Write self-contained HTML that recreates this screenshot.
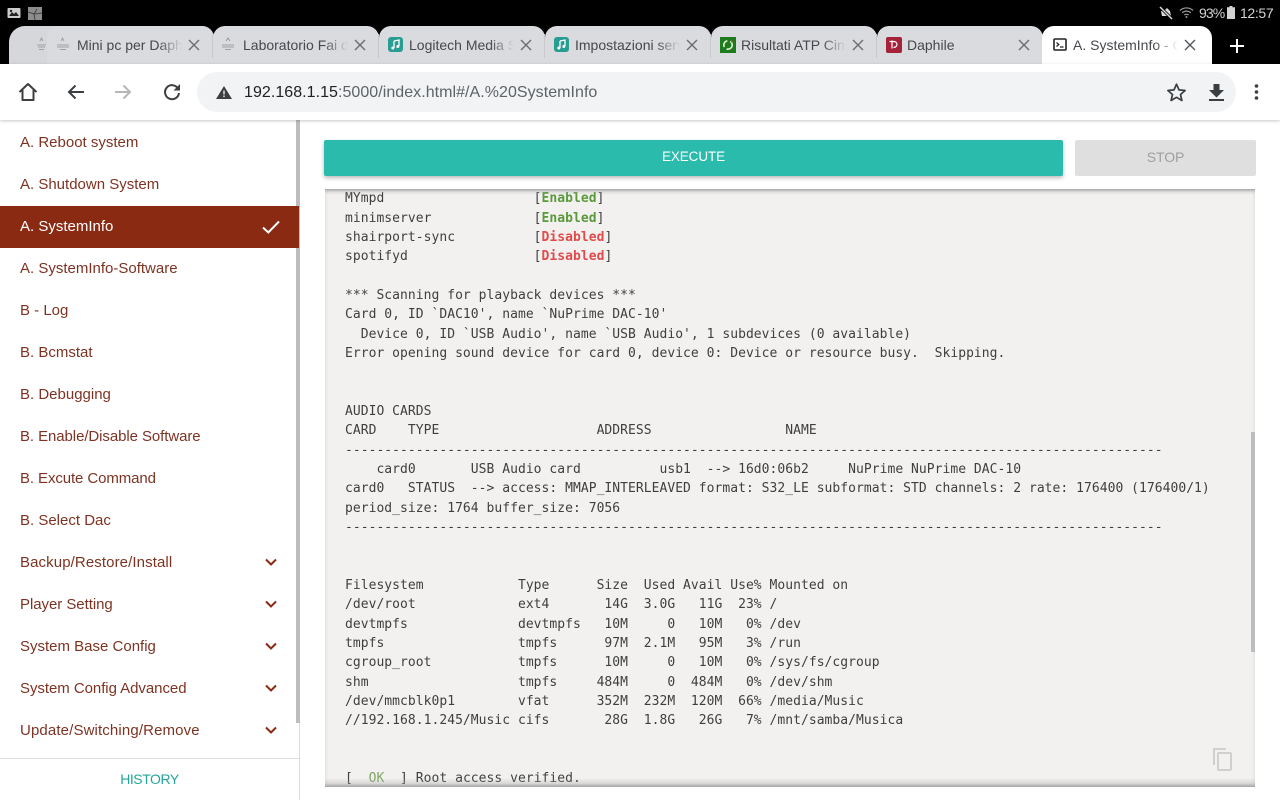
<!DOCTYPE html>
<html><head><meta charset="utf-8">
<style>
html,body{margin:0;padding:0;width:1280px;height:800px;overflow:hidden;background:#fff;font-family:"Liberation Sans",sans-serif}
.a{position:absolute}
#top{left:0;top:0;width:1280px;height:64px;background:#000}
.tab{position:absolute;top:26px;height:38px;background:#dadbde;border-radius:12px 12px 0 0}
.sep{position:absolute;top:34px;width:1px;height:24px;background:#c8c9cc}
.tt{position:absolute;top:36px;height:18px;line-height:18px;font-size:14px;color:#45484c;white-space:nowrap;overflow:hidden}
.fade{position:absolute;top:36px;height:18px;width:24px;background:linear-gradient(90deg,rgba(218,219,222,0),#dadbde)}
.x{position:absolute;top:39px;width:12px;height:12px}
.fav{position:absolute}
.mi{position:absolute;left:0;width:296px;height:42px;line-height:44px;padding-left:20px;box-sizing:border-box;font-size:15px;color:#7e3322;white-space:nowrap}
.ch{position:absolute;left:265px;width:12px;height:8px}
pre{position:absolute;left:345px;top:0;margin:0;font:13px/19.33px "DejaVu Sans Mono","Liberation Mono",monospace;letter-spacing:.035px;color:#3f3f3f}
pre b.g{color:#5a9a3a}pre b.r{color:#e04b4b}pre span.g{color:#7fa860}
</style></head><body>
<div class="a" id="top"></div>

<!-- status bar -->
<svg class="a" style="left:7px;top:7px" width="36" height="13" viewBox="0 0 36 13"><rect x="0.5" y="1" width="13" height="10" rx="1" fill="#ccc"/><path d="M2 9l3-4 2 2 2-2 3 4z" fill="#222"/><circle cx="4" cy="4" r="1.2" fill="#222"/><rect x="21" y="0" width="14" height="13" fill="#8d8d8d"/><path d="M21 5l6 2 3-5M28 13l-1-6 8-1" stroke="#444" fill="none"/></svg>
<svg class="a" style="left:1159px;top:6px" width="14" height="14" viewBox="0 0 14 14"><path d="M2 5h3l3-3 3 3 1 5H3z" fill="#ddd"/><path d="M1 1l12 12" stroke="#000" stroke-width="3"/><path d="M1 1l12 12" stroke="#ddd" stroke-width="1.4"/></svg>
<svg class="a" style="left:1179px;top:6px" width="16" height="13" viewBox="0 0 16 13" fill="none" stroke="#999"><path d="M1 4.500a9.500 9.500 0 0 1 13 0" stroke-width="1.200"/><path d="M3.200 6.800a6.400 6.400 0 0 1 8.600 0" stroke-width="1.200"/><path d="M5.300 9a3.400 3.400 0 0 1 4.400 0" stroke-width="1.200"/><circle cx="7.500" cy="11" r="1" fill="#999" stroke="none"/></svg>
<div class="a" style="left:1199px;top:5px;font-size:14px;line-height:16px;color:#d2d2d2;letter-spacing:-.9px">93%</div>
<svg class="a" style="left:1227px;top:6px" width="8" height="13" viewBox="0 0 8 13"><path d="M2.500 0h3v1.200H8V13H0V1.200h2.500z" fill="#d2d2d2"/></svg>
<div class="a" style="left:1240px;top:5px;font-size:14px;line-height:16px;color:#d2d2d2;letter-spacing:-.35px">12:57</div>

<!-- tabs -->
<div class="tab" style="left:9px;width:205px;border-top-left-radius:16px;background:#d6d7da"></div>
<div class="tab" style="left:47px;width:167px;background:#dadbde"></div>
<div class="tab" style="left:213px;width:166px"></div>
<div class="tab" style="left:379px;width:166px"></div>
<div class="tab" style="left:545px;width:166px"></div>
<div class="tab" style="left:711px;width:166px"></div>
<div class="tab" style="left:877px;width:166px"></div>
<div class="tab" style="left:1042px;width:170px;background:#fff"></div>
<div class="sep" style="left:212px"></div><div class="sep" style="left:378px"></div><div class="sep" style="left:544px"></div><div class="sep" style="left:710px"></div><div class="sep" style="left:876px"></div>

<svg class="fav" style="left:35px;top:36px" width="38" height="18" viewBox="0 0 38 18"><g fill="none" stroke="#8e8e8e" stroke-width=".8"><path d="M5 5l1.500-3 1.500 3M2 9h9M3 11h7M4 13.500h5"/><path d="M26 5l1.500-3 1.500 3M22 9h12M22 11h12M25 13.500h6"/></g></svg>
<div class="tt" style="left:77px;width:105px">Mini pc per Daphile</div><div class="fade" style="left:158px"></div>
<svg class="fav" style="left:221px;top:36px" width="14" height="18" viewBox="0 0 14 18"><g fill="none" stroke="#8e8e8e" stroke-width=".8"><path d="M5 5l2-3 2 3M1 9h12M1 11h12M4 13.500h6"/></g></svg>
<div class="tt" style="left:243px;width:105px">Laboratorio Fai da te</div><div class="fade" style="left:324px"></div>

<svg class="fav" style="left:388px;top:37px" width="15" height="15" viewBox="0 0 15 15"><rect width="15" height="15" rx="3" fill="#2a9d92"/><path d="M6 4l5-1v6M6 4v7" stroke="#fff" stroke-width="1.300" fill="none"/><circle cx="4.800" cy="11" r="1.500" fill="#fff"/><circle cx="9.800" cy="9.500" r="1.500" fill="#fff"/></svg>
<div class="tt" style="left:409px;width:105px">Logitech Media Server</div><div class="fade" style="left:490px"></div>
<svg class="fav" style="left:554px;top:37px" width="15" height="15" viewBox="0 0 15 15"><rect width="15" height="15" rx="3" fill="#2a9d92"/><path d="M6 4l5-1v6M6 4v7" stroke="#fff" stroke-width="1.300" fill="none"/><circle cx="4.800" cy="11" r="1.500" fill="#fff"/><circle cx="9.800" cy="9.500" r="1.500" fill="#fff"/></svg>
<div class="tt" style="left:575px;width:105px">Impostazioni server</div><div class="fade" style="left:656px"></div>
<svg class="fav" style="left:720px;top:37px" width="16" height="16" viewBox="0 0 16 16"><rect width="16" height="16" fill="#1d7a1d"/><circle cx="8" cy="8" r="4.200" fill="none" stroke="#e8f0d8" stroke-width="1.600" stroke-dasharray="8 3"/><path d="M11 3l2 1-2 2z" fill="#d9472b"/></svg>
<div class="tt" style="left:741px;width:105px">Risultati ATP Cincinnati</div><div class="fade" style="left:822px"></div>
<svg class="fav" style="left:886px;top:37px" width="16" height="16" viewBox="0 0 16 16"><rect width="16" height="16" rx="2" fill="#a5223a"/><path d="M6 3.500v8M3.500 4.500h4.500c4 .3 4 5.500-.5 6" stroke="#fff" stroke-width="1.200" fill="none"/></svg>
<div class="tt" style="left:907px;width:105px">Daphile</div>
<svg class="fav" style="left:1053px;top:38px" width="14" height="13" viewBox="0 0 14 13"><rect x="1" y="1" width="12" height="11" rx="1" fill="none" stroke="#222" stroke-width="1.600"/><path d="M3.500 4.500l2.300 2-2.300 2M7 9h3.500" stroke="#222" stroke-width="1.200" fill="none"/></svg>
<div class="tt" style="left:1073px;width:105px">A. SystemInfo - Chrome</div><div class="fade" style="left:1154px;background:linear-gradient(90deg,rgba(255,255,255,0),#fff)"></div>

<svg class="x" style="left:188px" viewBox="0 0 12 12"><path d="M1 1l10 10M11 1L1 11" stroke="#6a6d70" stroke-width="1.400"/></svg>
<svg class="x" style="left:354px" viewBox="0 0 12 12"><path d="M1 1l10 10M11 1L1 11" stroke="#6a6d70" stroke-width="1.400"/></svg>
<svg class="x" style="left:520px" viewBox="0 0 12 12"><path d="M1 1l10 10M11 1L1 11" stroke="#6a6d70" stroke-width="1.400"/></svg>
<svg class="x" style="left:686px" viewBox="0 0 12 12"><path d="M1 1l10 10M11 1L1 11" stroke="#6a6d70" stroke-width="1.400"/></svg>
<svg class="x" style="left:852px" viewBox="0 0 12 12"><path d="M1 1l10 10M11 1L1 11" stroke="#6a6d70" stroke-width="1.400"/></svg>
<svg class="x" style="left:1018px" viewBox="0 0 12 12"><path d="M1 1l10 10M11 1L1 11" stroke="#6a6d70" stroke-width="1.400"/></svg>
<svg class="x" style="left:1184px" viewBox="0 0 12 12"><path d="M1 1l10 10M11 1L1 11" stroke="#55585b" stroke-width="1.400"/></svg>
<svg class="a" style="left:1230px;top:39px" width="14" height="14" viewBox="0 0 14 14"><path d="M7 0v14M0 7h14" stroke="#fff" stroke-width="2"/></svg>

<!-- toolbar -->
<div class="a" style="left:0;top:64px;width:1280px;height:56px;background:#fff;box-shadow:0 1px 3px rgba(0,0,0,.22);z-index:3"></div>
<div class="a" style="left:197px;top:72px;width:1039px;height:40px;border-radius:20px;background:#f1f3f4;z-index:4"></div>
<svg class="a" style="z-index:5;left:18px;top:82px" width="20" height="20" viewBox="0 0 20 20" fill="none" stroke="#3c3f42" stroke-width="2"><path d="M1.500 10L10 2l8.500 8M4.500 8v10h11V8" stroke-linejoin="round"/></svg>
<svg class="a" style="z-index:5;left:67px;top:84px" width="17" height="16" viewBox="0 0 17 16" fill="none" stroke="#3c3f42" stroke-width="2"><path d="M17 8H2M8.500 1.500L2 8l6.500 6.500"/></svg>
<svg class="a" style="z-index:5;left:115px;top:84px" width="17" height="16" viewBox="0 0 17 16" fill="none" stroke="#b4b6b8" stroke-width="2"><path d="M0 8h15M8.500 1.500L15 8l-6.500 6.500"/></svg>
<svg class="a" style="z-index:5;left:163px;top:83px" width="18" height="18" viewBox="0 0 18 18" fill="none"><path d="M15 5.500A7 7 0 1 0 16 10" stroke="#3c3f42" stroke-width="2"/><path d="M17 1v6.500h-6.500z" fill="#3c3f42"/></svg>
<svg class="a" style="z-index:5;left:216px;top:86px" width="16" height="13" viewBox="0 0 16 13"><path d="M8 0l8 13H0z" fill="#3c3f42"/><path d="M8 4.500v4M8 9.500v1.500" stroke="#f1f3f4" stroke-width="1.400"/></svg>
<div class="a" style="z-index:5;left:244px;top:83px;height:20px;line-height:20px;font-size:16px;color:#202124;white-space:nowrap;letter-spacing:.045px">192.168.1.15<span style="color:#5f6368">:5000/index.html#/A.%20SystemInfo</span></div>
<svg class="a" style="z-index:5;left:1166px;top:82px" width="21" height="20" viewBox="0 0 21 20"><path d="M10.500 2.200l2.500 5.700 6.100.6-4.600 4 1.400 6-5.400-3.200-5.400 3.200 1.400-6-4.600-4 6.100-.6z" fill="none" stroke="#3c3f42" stroke-width="1.700" stroke-linejoin="round"/></svg>
<svg class="a" style="z-index:5;left:1208px;top:84px" width="17" height="18" viewBox="0 0 17 18"><path d="M5.500 0h6v6H16l-7.500 7.500L1 6h4.500z" fill="#3c3f42"/><rect x="1" y="15" width="15" height="2" fill="#3c3f42"/></svg>
<svg class="a" style="z-index:5;left:1254px;top:84px" width="5" height="16" viewBox="0 0 5 16"><circle cx="2.500" cy="2" r="1.800" fill="#3c3f42"/><circle cx="2.500" cy="8" r="1.800" fill="#3c3f42"/><circle cx="2.500" cy="14" r="1.800" fill="#3c3f42"/></svg>

<!-- sidebar -->
<div class="a" style="left:299px;top:120px;width:1px;height:680px;background:#dcdcdc"></div>
<div class="a" style="left:296px;top:120px;width:4px;height:603px;background:#bdbdbd"></div>
<div class="mi" style="top:121px">A. Reboot system</div>
<div class="mi" style="top:163px">A. Shutdown System</div>
<div class="mi" style="top:206px;width:299px;background:#8a2a12;color:#fff;line-height:42px">A. SystemInfo</div>
<svg class="a" style="left:262px;top:220px" width="18" height="14" viewBox="0 0 18 14"><path d="M1 7.500l5.300 5L17 1.500" fill="none" stroke="#fff" stroke-width="2"/></svg>
<div class="mi" style="top:247px">A. SystemInfo-Software</div>
<div class="mi" style="top:289px">B - Log</div>
<div class="mi" style="top:331px">B. Bcmstat</div>
<div class="mi" style="top:373px">B. Debugging</div>
<div class="mi" style="top:415px;letter-spacing:-.08px">B. Enable/Disable Software</div>
<div class="mi" style="top:457px;letter-spacing:-.1px">B. Excute Command</div>
<div class="mi" style="top:499px">B. Select Dac</div>
<div class="mi" style="top:541px;letter-spacing:.1px">Backup/Restore/Install</div>
<div class="mi" style="top:583px;letter-spacing:-.05px">Player Setting</div>
<div class="mi" style="top:625px">System Base Config</div>
<div class="mi" style="top:667px;letter-spacing:-.05px">System Config Advanced</div>
<div class="mi" style="top:709px;letter-spacing:.13px">Update/Switching/Remove</div>
<svg class="ch" style="top:558px" viewBox="0 0 12 8"><path d="M1 1.500l5 5 5-5" fill="none" stroke="#8a2a12" stroke-width="2"/></svg>
<svg class="ch" style="top:600px" viewBox="0 0 12 8"><path d="M1 1.500l5 5 5-5" fill="none" stroke="#8a2a12" stroke-width="2"/></svg>
<svg class="ch" style="top:642px" viewBox="0 0 12 8"><path d="M1 1.500l5 5 5-5" fill="none" stroke="#8a2a12" stroke-width="2"/></svg>
<svg class="ch" style="top:684px" viewBox="0 0 12 8"><path d="M1 1.500l5 5 5-5" fill="none" stroke="#8a2a12" stroke-width="2"/></svg>
<svg class="ch" style="top:726px" viewBox="0 0 12 8"><path d="M1 1.500l5 5 5-5" fill="none" stroke="#8a2a12" stroke-width="2"/></svg>
<div class="a" style="left:0;top:758px;width:299px;height:1px;background:#dcdcdc"></div>
<div class="a" style="left:0;top:770px;width:299px;text-align:center;font-size:14px;line-height:18px;color:#26a69a;letter-spacing:-.45px">HISTORY</div>

<!-- buttons -->
<div class="a" style="left:324px;top:140px;width:739px;height:36px;background:#2bbbad;border-radius:2px;box-shadow:0 2px 4px rgba(0,0,0,.28);color:#fff;font-size:13.5px;line-height:34px;text-align:center;letter-spacing:-.1px">EXECUTE</div>
<div class="a" style="left:1075px;top:140px;width:181px;height:36px;background:#dfdfdf;border-radius:2px;color:#9f9f9f;font-size:14px;line-height:34px;text-align:center;letter-spacing:-.1px">STOP</div>

<!-- terminal -->
<div class="a" id="term" style="left:325px;top:189px;width:930px;height:598px;background:#f2f1f0;overflow:hidden;box-shadow:inset 0 0 4px rgba(0,0,0,.12)">
<pre style="left:20px;top:0.3px">MYmpd                   [<b class="g">Enabled</b>]
minimserver             [<b class="g">Enabled</b>]
shairport-sync          [<b class="r">Disabled</b>]
spotifyd                [<b class="r">Disabled</b>]

*** Scanning for playback devices ***
Card 0, ID `DAC10', name `NuPrime DAC-10'
  Device 0, ID `USB Audio', name `USB Audio', 1 subdevices (0 available)
Error opening sound device for card 0, device 0: Device or resource busy.  Skipping.


AUDIO CARDS
CARD    TYPE                    ADDRESS                 NAME
--------------------------------------------------------------------------------------------------------
    card0       USB Audio card          usb1  --> 16d0:06b2     NuPrime NuPrime DAC-10
card0   STATUS  --> access: MMAP_INTERLEAVED format: S32_LE subformat: STD channels: 2 rate: 176400 (176400/1)
period_size: 1764 buffer_size: 7056
--------------------------------------------------------------------------------------------------------


Filesystem            Type      Size  Used Avail Use% Mounted on
/dev/root             ext4       14G  3.0G   11G  23% /
devtmpfs              devtmpfs   10M     0   10M   0% /dev
tmpfs                 tmpfs      97M  2.1M   95M   3% /run
cgroup_root           tmpfs      10M     0   10M   0% /sys/fs/cgroup
shm                   tmpfs     484M     0  484M   0% /dev/shm
/dev/mmcblk0p1        vfat      352M  232M  120M  66% /media/Music
//192.168.1.245/Music cifs       28G  1.8G   26G   7% /mnt/samba/Musica


[  <span class="g">OK</span>  ] Root access verified.</pre>
<div class="a" style="left:0;top:0;width:930px;height:6px;background:linear-gradient(#a9a9a9,rgba(170,170,170,.25) 50%,rgba(242,241,240,0))"></div>
<div class="a" style="left:0;bottom:0;width:930px;height:9px;background:linear-gradient(rgba(242,241,240,0),rgba(170,170,170,.35) 60%,#a5a5a5)"></div>
<div class="a" style="left:926px;top:243px;width:4px;height:220px;background:#bdbdbd"></div>
<svg class="a" style="left:887px;top:558px" width="21" height="24" viewBox="0 0 21 24" fill="none" stroke="#cfcfce" stroke-width="2"><path d="M2 18V2h12"/><rect x="6" y="6" width="13" height="17" rx="1"/></svg>
</div>
</body></html>
